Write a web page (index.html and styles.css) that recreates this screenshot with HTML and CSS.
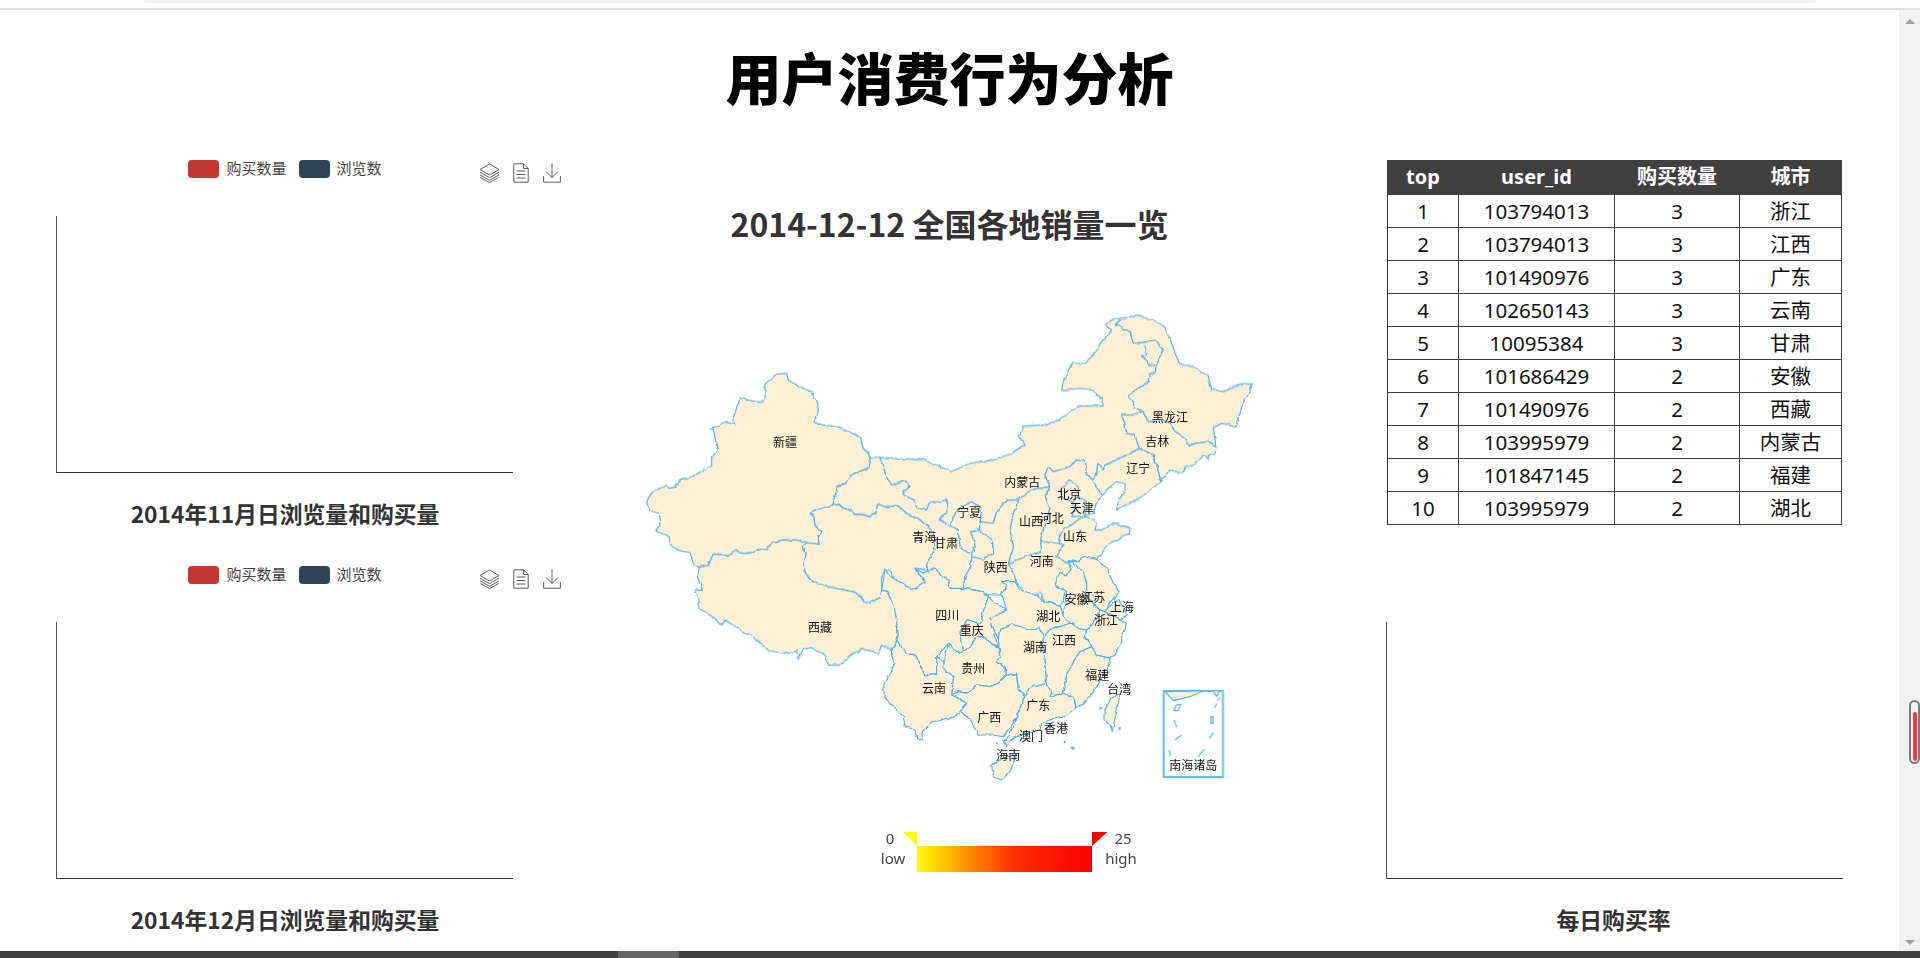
FILE: index.html
```html
<!DOCTYPE html>
<html lang="zh-CN">
<head>
<meta charset="utf-8">
<title>用户消费行为分析</title>
<link rel="stylesheet" href="styles.css">
</head>
<body>
<svg class="defs" width="0" height="0" aria-hidden="true">
  <defs>
    <symbol id="ic-stack" viewBox="0 0 21 20">
      <path d="M10.5 1 20 6.5 10.5 12 1 6.5Z"/>
      <path d="M1 9.2 10.5 14.7 20 9.2M1 11.9 10.5 17.4 20 11.9M1.5 14.5 10.5 19.6 19.5 14.5"/>
    </symbol>
    <symbol id="ic-doc" viewBox="0 0 16 20">
      <path d="M.8.8H10.5L15.2 5.5V19.2H.8Z"/>
      <path d="M10.5.8V5.5H15.2M3.5 8H12.5M3.5 11.5H12.5M3.5 15H12.5"/>
    </symbol>
    <symbol id="ic-save" viewBox="0 0 18 20">
      <path d="M9 .5V14.5M3 8.5 9 14.5 15 8.5M.6 13V19.2H17.4V13"/>
    </symbol>
    <linearGradient id="vm" x1="0" x2="1" y1="0" y2="0">
      <stop offset="0" stop-color="#ffff00"/>
      <stop offset=".3" stop-color="#ff8c00"/>
      <stop offset=".55" stop-color="#ff3000"/>
      <stop offset="1" stop-color="#ff0000"/>
    </linearGradient>
    <filter id="rough" x="-2%" y="-2%" width="104%" height="104%" color-interpolation-filters="sRGB">
      <feTurbulence type="fractalNoise" baseFrequency=".045" numOctaves="3" seed="4"/>
      <feDisplacementMap in="SourceGraphic" scale="11" xChannelSelector="R" yChannelSelector="G"/>
    </filter>
  </defs>
</svg>

<div class="browser-top"><div class="address-pill"></div></div>

<div class="viewport">
  <main class="page">
    <h1 class="page-title">用户消费行为分析</h1>
    <div class="columns">
      <section class="col">
        <article class="chart">
          <div class="chart-head">
            <span></span>
            <ul class="legend">
              <li class="legend-item"><i class="swatch swatch-buy"></i>购买数量</li>
              <li class="legend-item"><i class="swatch swatch-view"></i>浏览数</li>
            </ul>
            <div class="toolbox">
              <svg class="tool tool-stack"><use href="#ic-stack"/></svg>
              <svg class="tool tool-doc"><use href="#ic-doc"/></svg>
              <svg class="tool tool-save"><use href="#ic-save"/></svg>
            </div>
          </div>
          <div class="plot"></div>
          <h2 class="chart-title">2014年11月日浏览量和购买量</h2>
        </article>
        <article class="chart">
          <div class="chart-head">
            <span></span>
            <ul class="legend">
              <li class="legend-item"><i class="swatch swatch-buy"></i>购买数量</li>
              <li class="legend-item"><i class="swatch swatch-view"></i>浏览数</li>
            </ul>
            <div class="toolbox">
              <svg class="tool tool-stack"><use href="#ic-stack"/></svg>
              <svg class="tool tool-doc"><use href="#ic-doc"/></svg>
              <svg class="tool tool-save"><use href="#ic-save"/></svg>
            </div>
          </div>
          <div class="plot"></div>
          <h2 class="chart-title">2014年12月日浏览量和购买量</h2>
        </article>
      </section>

      <section class="col col-center">
        <h2 class="map-title">2014-12-12 全国各地销量一览</h2>
        <svg class="map" viewBox="0 0 1860 1740" role="img" aria-label="全国各地销量地图">
          <g filter="url(#rough)">
          <g class="regions" transform="translate(0 180)">
            <polygon points="410,42 440,40 445,60 475,78 515,95 533,128 535,155 525,185 535,193 600,202 640,220 662,235 670,265 693,292 688,322 660,335 630,350 617,372 592,378 588,400 575,435 540,447 510,460 522,470 525,495 543,515 535,530 538,553 500,548 470,540 430,540 395,548 380,568 350,570 325,582 300,578 285,570 265,585 220,582 205,615 178,622 160,610 150,578 112,570 92,555 88,530 65,520 47,510 60,495 55,460 30,450 20,425 35,395 78,377 85,385 105,382 120,358 155,350 190,330 215,318 215,295 232,270 220,205 210,205 260,187 285,193 278,178 300,115 355,127 375,120 375,72"/>
            <polygon points="178,622 205,615 220,582 265,585 285,570 300,578 325,582 350,570 380,568 395,548 430,540 470,540 500,548 490,560 497,590 492,610 497,640 520,665 575,682 640,695 665,710 668,722 690,728 720,712 725,690 740,693 762,735 770,780 775,825 765,860 750,870 725,855 715,880 665,865 625,890 600,915 565,915 555,885 510,862 490,865 475,900 470,870 440,880 400,875 385,870 360,850 335,825 320,825 285,800 255,780 245,795 225,775 178,745 172,715 163,690 188,690 172,650"/>
            <polygon points="510,460 540,447 575,435 598,433 610,445 635,450 642,462 670,463 688,470 708,460 712,432 735,440 775,437 800,460 835,475 880,515 885,545 885,570 860,610 863,630 825,625 835,640 855,665 835,680 820,693 800,680 780,685 765,665 752,635 735,630 725,650 725,690 720,712 690,728 668,722 665,710 640,695 575,682 520,665 497,640 492,610 497,590 490,560 500,548 538,553 535,530 543,515 525,495 522,470"/>
          </g>
          <g class="regions" transform="translate(930 0)">
            <polygon points="-237,472 -210,472 -192,525 -175,555 -130,543 -122,558 -142,583 -105,602 -95,625 -75,630 -60,610 -10,600 -5,625 -30,660 0,677 25,690 30,735 55,760 65,765 75,735 62,695 88,690 128,720 128,760 100,778 65,770 62,800 45,830 40,865 30,870 0,865 -5,840 -25,830 -45,805 -75,845 -95,820 -105,805 -67,810 -70,790 -45,750 -50,695 -95,655 -130,640 -155,617 -195,620 -218,612 -222,640 -242,650 -260,643 -288,642 -295,630 -320,625 -332,613 -355,615 -342,580 -338,558 -313,552 -300,530 -270,515 -242,502"/>
            <polygon points="-210,472 -130,477 -80,480 -40,495 5,515 60,490 130,480 185,460 225,432 208,405 222,378 290,375 350,345 385,318 460,318 455,295 420,268 385,265 335,270 340,245 365,190 410,190 455,125 485,90 465,75 490,55 515,55 500,75 540,95 550,130 617,122 640,148 618,195 617,215 597,225 595,245 535,285 555,320 580,335 545,345 515,345 525,370 530,400 555,405 568,445 520,470 465,495 460,510 443,490 440,525 428,540 410,520 405,480 375,482 360,500 310,515 295,500 285,525 300,560 240,570 205,600 170,600 140,635 130,670 90,665 95,625 65,605 50,612 20,630 0,677 -30,660 -5,625 -10,600 -60,610 -75,630 -95,625 -105,602 -142,583 -122,558 -130,543 -175,555 -192,525"/>
            <polyline class="line" points="585,135 590,165 575,170 590,180 600,197 617,195"/>
            <polygon points="515,55 565,45 610,60 645,85 665,130 688,190 740,205 775,230 785,270 830,272 860,258 905,248 893,285 880,310 855,380 815,370 790,385 798,440 775,425 735,430 720,440 700,410 675,395 660,370 630,360 600,365 580,335 555,320 535,285 595,245 597,225 617,215 618,195 640,148 617,122 550,130 540,95 500,75"/>
            <polygon points="580,335 600,365 630,360 660,370 675,395 700,410 720,440 735,430 775,425 798,440 795,460 775,465 775,480 760,465 735,490 705,505 700,520 660,510 632,545 620,495 610,465 568,445 555,405 530,400 525,370 515,345 545,345"/>
            <polygon points="568,445 610,465 620,495 632,545 600,570 575,590 540,610 500,628 505,600 525,575 525,550 500,545 475,565 455,585 445,570 428,540 440,525 443,490 460,510 465,495 520,470"/>
            <polygon points="285,525 295,500 310,515 360,500 375,482 405,480 410,520 428,540 445,570 455,585 440,610 430,640 405,648 395,655 345,685 330,705 325,730 272,725 272,715 290,660 300,625 285,590 300,560"/>
            <polygon points="330,570 360,540 385,560 385,590 365,605 340,595"/>
            <polygon points="385,590 405,600 405,648 365,650 375,620 365,605"/>
            <polygon points="205,600 240,570 300,560 285,590 300,625 290,660 272,715 275,755 240,765 175,790 190,740 180,690 190,640"/>
            <polygon points="175,790 240,765 275,755 272,725 325,730 345,735 325,755 318,770 355,790 365,810 350,825 330,820 315,855 345,870 340,905 330,915 280,905 275,880 225,880 200,850 190,820"/>
            <polygon points="400,650 430,655 440,670 435,690 455,690 490,668 540,683 538,700 490,725 470,740 440,778 425,785 410,800 385,792 370,780 355,790 318,770 325,755 345,735 325,730 330,705 345,685"/>
            <polygon points="20,630 65,605 95,625 90,665 88,690 62,695 75,735 65,765 55,760 30,735 25,690 0,677"/>
            <polygon points="90,665 130,670 140,635 170,600 205,600 190,640 180,690 190,740 175,790 190,820 200,850 195,847 155,845 170,860 155,885 115,885 100,875 40,865 45,830 62,800 65,770 100,778 128,760 128,720 88,690"/>
          </g>
          <g class="regions" transform="translate(690 720)">
            <polygon points="35,150 45,90 60,110 75,120 100,130 125,150 165,125 135,85 160,100 195,85 215,110 235,120 240,145 280,145 340,155 355,170 340,215 335,245 320,255 310,245 290,240 270,280 275,295 280,335 265,340 235,310 200,350 200,400 165,405 130,340 110,340 80,300 75,320 85,285 80,240 72,195 50,153"/>
            <polygon points="355,170 365,180 410,210 360,235 370,275 385,320 365,315 345,290 320,290 300,320 280,335 275,295 270,280 290,240 310,245 320,255 335,245 340,215"/>
            <polygon points="600,62 640,95 650,130 650,170 690,210 680,240 650,270 625,265 600,250 580,225 585,190 590,155 555,135 570,97 590,105 605,90 595,70"/>
            <polygon points="595,70 610,60 625,65 640,50 680,58 710,85 730,130 750,155 740,165 720,185 705,215 690,210 650,170 650,130 640,95 600,62"/>
            <polygon points="705,215 750,240 770,250 755,285 755,310 735,345 720,355 680,345 665,320 645,285 650,270 680,240 690,210"/>
            <polygon points="725,190 745,180 775,225 750,240 705,215"/>
            <polygon points="435,125 450,150 500,165 520,185 570,195 580,225 600,250 570,260 545,265 520,290 510,262 495,270 465,265 425,252 390,268 385,295 365,260 360,235 410,210 395,160 410,140 395,125"/>
            <polygon points="222,365 235,310 265,340 280,335 300,320 320,290 345,290 365,315 385,325 390,350 380,365 405,380 405,405 385,430 360,440 320,435 290,460 265,455 245,465 250,410 220,385"/>
            <polygon points="75,320 80,300 110,340 130,340 165,405 200,400 200,350 222,365 220,385 250,410 245,465 290,490 272,515 240,535 225,540 190,545 155,580 160,600 140,598 135,570 105,560 100,530 70,500 42,470 42,430 62,400 72,370 60,330"/>
            <polygon points="245,465 265,455 290,460 320,435 360,440 385,430 410,405 440,400 445,450 465,465 440,530 400,590 370,585 330,585 310,560 305,545 280,520 272,515 290,490"/>
            <polygon points="465,465 490,435 530,435 545,455 540,468 580,460 610,475 615,505 585,530 540,540 515,550 510,570 440,590 420,600 410,620 400,605 420,580 440,530"/>
            <polygon points="390,268 425,252 465,265 495,270 510,262 520,290 520,345 528,400 530,435 490,435 465,465 445,450 440,400 410,405 405,380 380,365 390,350 385,295"/>
            <polygon points="520,290 545,265 570,260 600,250 625,265 650,270 645,290 665,320 630,335 610,365 590,405 578,460 540,468 545,455 530,435 528,400 520,345"/>
            <polygon points="665,320 680,345 720,355 715,375 690,425 670,455 640,490 615,505 610,475 578,460 590,405 610,365 630,335"/>
            <polygon points="385,660 410,650 440,645 430,670 420,695 395,720 370,710 365,680"/>
            <polygon points="750,462 745,490 738,525 727,572 705,540 705,510 725,470"/>
            <polygon points="610,618 613,622 609,625 606,621"/>
            <polygon points="583,604 586,606 583,608"/>
            <polygon points="690,504 693,506 690,509"/>
            <polygon points="748,565 751,567 748,570"/>
            <polygon points="380,608 383,610 380,612"/>
          </g>
          </g>
          <g transform="translate(690 720)">
            <rect class="sea-box" x="881" y="453" width="178" height="258"/>
            <g class="regions">
              <polygon points="885,455 910,482 960,470 1000,452"/>
              <polygon points="1028,452 1040,470 1048,452"/>
              <polygon points="912,512 918,495 932,492 925,512"/>
              <polygon points="1022,530 1029,530 1029,550 1022,550"/>
              <polyline class="line" points="912,540 920,562"/>
              <polyline class="line" points="935,585 915,600"/>
              <polyline class="line" points="897,630 902,648"/>
              <polyline class="line" points="1002,628 985,650"/>
              <polyline class="line" points="1030,578 1018,595"/>
              <polyline class="line" points="1050,470 1028,515" stroke-dasharray="14 10"/>
            </g>
          </g>
          <g class="labels" transform="translate(0 180)">
            <text x="435" y="245">新疆</text><text x="540" y="800">西藏</text>
            <text x="853" y="528">青海</text><text x="918" y="548">甘肃</text>
          </g>
          <g class="labels" transform="translate(930 0)">
            <text x="660" y="348">黑龙江</text><text x="622" y="420">吉林</text><text x="565" y="503">辽宁</text>
            <text x="217" y="545">内蒙古</text><text x="358" y="580">北京</text><text x="395" y="622">天津</text>
            <text x="305" y="652">河北</text><text x="243" y="660">山西</text><text x="58" y="635">宁夏</text>
            <text x="375" y="705">山东</text><text x="275" y="780">河南</text><text x="137" y="800">陕西</text>
          </g>
          <g class="labels" transform="translate(690 720)">
            <text x="620" y="175">安徽</text><text x="670" y="168">江苏</text><text x="755" y="200">上海</text>
            <text x="708" y="238">浙江</text><text x="232" y="222">四川</text><text x="535" y="225">湖北</text>
            <text x="305" y="268">重庆</text><text x="495" y="320">湖南</text><text x="582" y="298">江西</text>
            <text x="310" y="383">贵州</text><text x="192" y="443">云南</text><text x="682" y="402">福建</text>
            <text x="748" y="445">台湾</text><text x="505" y="492">广东</text><text x="358" y="530">广西</text>
            <text x="558" y="563">香港</text><text x="483" y="585">澳门</text><text x="415" y="642">海南</text>
            <text x="970" y="672">南海诸岛</text>
          </g>
          <rect x="831" y="1638" width="525" height="78" fill="url(#vm)"/>
          <polygon class="vm-low" points="789,1596 831,1596 831,1638"/>
          <polygon class="vm-high" points="1356,1596 1402,1596 1356,1638"/>
          <g class="vm-labels">
            <text x="750" y="1614">0</text><text x="759" y="1674">low</text>
            <text x="1449" y="1614">25</text><text x="1443" y="1674">high</text>
          </g>
        </svg>
      </section>

      <section class="col col-right">
        <div class="table-wrap">
          <table class="top-table">
            <colgroup><col class="c-top"><col class="c-id"><col class="c-num"><col class="c-city"></colgroup>
            <thead><tr><th>top</th><th>user_id</th><th>购买数量</th><th>城市</th></tr></thead>
            <tbody>
              <tr><td>1</td><td>103794013</td><td>3</td><td>浙江</td></tr>
              <tr><td>2</td><td>103794013</td><td>3</td><td>江西</td></tr>
              <tr><td>3</td><td>101490976</td><td>3</td><td>广东</td></tr>
              <tr><td>4</td><td>102650143</td><td>3</td><td>云南</td></tr>
              <tr><td>5</td><td>10095384</td><td>3</td><td>甘肃</td></tr>
              <tr><td>6</td><td>101686429</td><td>2</td><td>安徽</td></tr>
              <tr><td>7</td><td>101490976</td><td>2</td><td>西藏</td></tr>
              <tr><td>8</td><td>103995979</td><td>2</td><td>内蒙古</td></tr>
              <tr><td>9</td><td>101847145</td><td>2</td><td>福建</td></tr>
              <tr><td>10</td><td>103995979</td><td>2</td><td>湖北</td></tr>
            </tbody>
          </table>
        </div>
        <article class="chart">
          <div class="chart-head"></div>
          <div class="plot plot-right"></div>
          <h2 class="chart-title chart-title-right">每日购买率</h2>
        </article>
      </section>
    </div>
  </main>
  <aside class="scrollbar">
    <i class="arrow-up"></i>
    <div class="thumb"><i class="thumb-fill"></i></div>
    <i class="arrow-down"></i>
  </aside>
</div>

<div class="hscroll"><i class="hscroll-thumb"></i></div>
</body>
</html>
```

FILE: styles.css
```css
* { box-sizing: border-box; }

html, body {
  margin: 0;
  height: 958px;
  overflow: hidden;
  background: #fff;
  font-family: "Noto Sans CJK SC", "Noto Sans", sans-serif;
}

.defs { display: block; height: 0; }

.browser-top {
  height: 10px;
  border-bottom: 2px solid #dfdfe6;
}

.address-pill {
  height: 3px;
  margin: 0 104px 0 143px;
  background: #f1f3f4;
  border-radius: 0 0 4px 4px;
}

.viewport {
  display: flex;
  height: 941px;
}

.page { flex: 1; min-width: 0; }

.page-title {
  margin: 0;
  height: 150px;
  padding-top: 30px;
  font-size: 56px;
  line-height: 72px;
  font-weight: 900;
  color: #000;
  text-align: center;
}

.columns {
  display: grid;
  grid-template-columns: 570px 759px 570px;
}

.col { min-width: 0; }

.col-center {
  display: flex;
  flex-direction: column;
  align-items: center;
}

/* Chart cards */
.chart { height: 406px; }

.chart-head {
  display: grid;
  grid-template-columns: 1fr auto 1fr;
  height: 23px;
}

.legend {
  display: flex;
  gap: 12px;
  margin: 0;
  padding: 0;
  list-style: none;
}

.legend-item {
  display: flex;
  align-items: flex-start;
  gap: 7px;
  height: 18px;
  font-size: 15px;
  line-height: 16px;
  color: #444;
}

.swatch {
  width: 31px;
  height: 18px;
  border-radius: 4px;
}
.swatch-buy { background: #c23531; }
.swatch-view { background: #2f4554; }

.toolbox {
  display: flex;
  justify-content: flex-end;
  align-items: flex-start;
  gap: 13px;
  padding: 3px 9px 0 0;
}

.tool {
  height: 20px;
  fill: none;
  stroke: #5c5c5c;
  stroke-width: 1;
}
.tool-stack { width: 21px; }
.tool-doc { width: 16px; margin-right: 1px; }
.tool-save { width: 18px; }

.plot {
  height: 257px;
  margin: 33px 57px 0 56px;
  border-left: 1px solid #555;
  border-bottom: 1px solid #333;
}
.plot-right { margin: 33px 56px 0 57px; }

.chart-title {
  margin: 24px 0 0;
  font-size: 22.8px;
  line-height: 34px;
  font-weight: 700;
  color: #333;
  text-align: center;
}
.chart-title-right { padding-right: 1px; }

/* Map */
.map-title {
  margin: 43px 0 0;
  font-size: 32px;
  line-height: 40px;
  font-weight: 700;
  color: #333;
  text-align: center;
}

.map {
  display: block;
  flex: none;
  width: 620px;
  height: 580px;
  margin-top: 57px;
}

.regions polygon {
  fill: #feefd5;
  stroke: #4db3ea;
  stroke-width: 3.4;
  stroke-linejoin: round;
}

.regions .line {
  fill: none;
  stroke: #4db3ea;
  stroke-width: 3.4;
}

.sea-box {
  fill: #fff;
  stroke: #62c0ee;
  stroke-width: 6;
}

.labels text {
  font-size: 36px;
  fill: #111;
  text-anchor: middle;
  dominant-baseline: central;
}

.vm-low { fill: #ffff00; }
.vm-high { fill: #ff0000; }

.vm-labels text {
  font-family: "Noto Sans", "Noto Sans CJK SC", sans-serif;
  font-size: 45px;
  fill: #444;
  text-anchor: middle;
  dominant-baseline: central;
}

/* Table */
.table-wrap {
  height: 406px;
  padding-left: 58px;
}

.top-table {
  width: 454px;
  table-layout: fixed;
  border-collapse: collapse;
  font-family: "Noto Sans", "Noto Sans CJK SC", sans-serif;
  font-size: 20.5px;
  color: #111;
  text-align: center;
}

.c-top { width: 71px; }
.c-id { width: 156px; }
.c-num { width: 125px; }
.c-city { width: 102px; }

.top-table th {
  height: 34px;
  padding: 0 0 1px;
  font-size: 20px;
  background: #404040;
  border: 1px solid #404040;
  color: #fff;
  font-weight: 700;
  line-height: 26px;
}

.top-table td {
  height: 33px;
  padding: 0 0 1px;
  border: 1px solid #404040;
  line-height: 26px;
}

/* Window scrollbars */
.scrollbar {
  display: flex;
  flex-direction: column;
  flex: none;
  width: 21px;
  background: #f1f1f1;
}

.arrow-up {
  flex: none;
  width: 0;
  height: 0;
  margin: 9px 0 0 6px;
  border: solid transparent;
  border-width: 0 5px 5px;
  border-bottom-color: #a0a0a0;
}

.thumb {
  flex: none;
  width: 11px;
  height: 64px;
  margin: 676px 0 0 10px;
  padding: 10px 0 1px 2px;
  border: 2px solid #7a7a7a;
  border-radius: 6px;
}

.thumb-fill {
  display: block;
  width: 4px;
  height: 100%;
  background: #f03a3a;
  border-radius: 2px;
}

.arrow-down {
  flex: none;
  width: 0;
  height: 0;
  margin: 176px 0 0 6px;
  border: solid transparent;
  border-width: 5px 5px 0;
  border-top-color: #a0a0a0;
}

.hscroll {
  height: 7px;
  padding-left: 618px;
  background: #404040;
}

.hscroll-thumb {
  display: block;
  width: 61px;
  height: 100%;
  background: #666;
}
```
